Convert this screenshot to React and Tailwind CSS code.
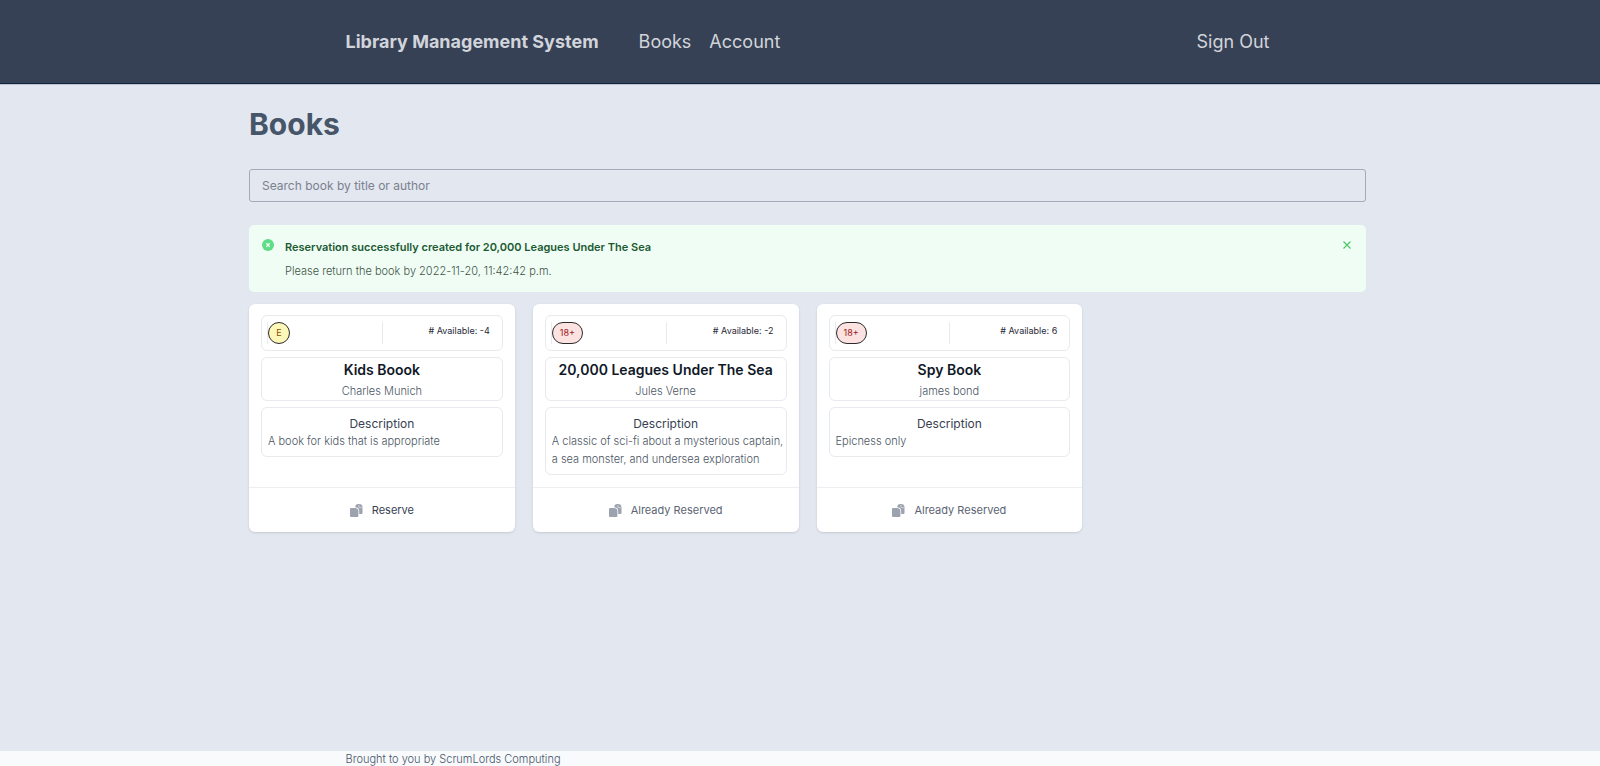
import React from "react";

const books = [
  {
    title: "Kids Boook",
    author: "Charles Munich",
    rating: "E",
    available: -4,
    description: "A book for kids that is appropriate",
    reserved: false,
  },
  {
    title: "20,000 Leagues Under The Sea",
    author: "Jules Verne",
    rating: "18+",
    available: -2,
    description:
      "A classic of sci-fi about a mysterious captain, a sea monster, and undersea exploration",
    reserved: true,
  },
  {
    title: "Spy Book",
    author: "james bond",
    rating: "18+",
    available: 6,
    description: "Epicness only",
    reserved: true,
  },
];

function DocumentsIcon() {
  return (
    <svg viewBox="0 0 13 13" className="size-[13px] fill-[#9ca3af]" aria-hidden="true">
      <path d="M1 4h4.100a3.300 3.300 0 0 1 3.300 3.300V12a1 1 0 0 1-1 1H1a1 1 0 0 1-1-1V5a1 1 0 0 1 1-1z" />
      <path d="M5.200 3.200C5.200 1.300 6.300 0 8 0h1.200a3.400 3.400 0 0 1 3.300 3.300v5.600a1 1 0 0 1-1 1H9.200V7.300a4.100 4.100 0 0 0-4-4.100z" />
      <path d="M8.900.800v2.100a.700.700 0 0 0 .700.700h2.300" fill="none" stroke="#fff" strokeWidth=".5" />
    </svg>
  );
}

function Header() {
  return (
    <header className="border-b border-[#0f2540] bg-[#374155] pl-[15px] text-lg leading-7 text-[#d1d5db] shadow-[0_1px_0_#bcc3d0]">
      <div className="mx-auto flex max-w-[924px] items-center pt-7 pb-[27px]">
        <span className="font-bold">Library Management System</span>
        <nav className="ml-10 flex flex-1 items-center gap-[18px]">
          <a href="#books">Books</a>
          <a href="#account">Account</a>
          <a href="#signout" className="ml-auto">
            Sign Out
          </a>
        </nav>
      </div>
    </header>
  );
}

function Alert() {
  return (
    <section
      role="status"
      className="mt-[23px] flex items-start rounded-[5px] bg-[#f0fdf4] px-[13px] pt-[14px] pb-[13px]"
    >
      <svg viewBox="0 0 12 12" className="size-3" aria-hidden="true">
        <circle cx="6" cy="6" r="6" fill="#5fdc86" />
        <path d="M4.300 4.300l3.400 3.400M7.700 4.300L4.300 7.700" stroke="#f0fdf4" strokeWidth="1.300" />
      </svg>
      <div className="ml-[11px] flex-1 text-[11px] leading-4">
        <h2 className="font-semibold text-[#1c5a33]">
          Reservation successfully created for 20,000 Leagues Under The Sea
        </h2>
        <p className="mt-2 font-light text-[#3f5548]">
          Please return the book by 2022-11-20, 11:42:42 p.m.
        </p>
      </div>
      <button type="button" aria-label="Dismiss" className="mt-[2px] mr-[2px]">
        <svg viewBox="0 0 8 8" className="size-2" aria-hidden="true">
          <path d="M.500.500l7 7M7.500.500l-7 7" stroke="#4cc766" strokeWidth="1.200" />
        </svg>
      </button>
    </section>
  );
}

function BookCard({ book }) {
  const badge = book.rating === "E" ? "bg-[#fdf8b8] text-[#854d0e]" : "bg-[#fde2e2] text-[#991b1b]";
  return (
    <li className="flex flex-col rounded-[6px] bg-white shadow-sm">
      <div className="flex flex-1 flex-col gap-[6px] px-3 pt-[11px] pb-3">
        <div className="rounded-[6px] border border-[#e9eaee] px-[5px] py-[6px]">
          <div className="grid grid-cols-2 text-[9px]">
            <div className="flex border-l border-[#e9eaee]">
              <span
                className={`flex h-[22px] min-w-[22px] items-center justify-center rounded-full border border-[#2b2b2b] px-[7px] pb-px leading-3 ${badge}`}
              >
                {book.rating}
              </span>
            </div>
            <div className="border-l border-[#e9eaee] pt-[3px] pr-[7px] text-right leading-3 text-[#1f2937]">
              # Available: {book.available}
            </div>
          </div>
        </div>
        <div className="rounded-[6px] border border-[#e9eaee] pt-[3px] text-center">
          <h3 className="text-[14px] leading-[18px] font-semibold text-[#111827]">{book.title}</h3>
          <p className="mt-1 text-[11px] leading-[17px] font-light text-[#4b5563]">{book.author}</p>
        </div>
        <div className="rounded-[6px] border border-[#e9eaee] pt-[7px] pb-[6px] pl-[6px]">
          <h4 className="pr-[6px] text-center text-[12px] leading-[17px] text-[#374151]">
            Description
          </h4>
          <p className="text-[11px] leading-[18px] font-light text-[#4b5563]">{book.description}</p>
        </div>
      </div>
      <button
        type="button"
        disabled={book.reserved}
        className="flex h-[45px] items-center justify-center gap-[9px] border-t border-[#eceef1] text-[11px] leading-4 text-[#374151] disabled:text-[#5b6472]"
      >
        <DocumentsIcon />
        {book.reserved ? "Already Reserved" : "Reserve"}
      </button>
    </li>
  );
}

export default function App() {
  return (
    <div className="flex min-h-screen flex-col bg-[#e2e7f0] font-['Inter',sans-serif]">
      <Header />
      <div className="flex-1 pl-[15px]">
        <main className="mx-auto max-w-[1117px] pt-[22px]">
          <h1 className="text-3xl leading-9 font-bold text-[#475569]">Books</h1>
          <input
            type="search"
            aria-label="Search book by title or author"
            placeholder="Search book by title or author"
            className="mt-[27px] block h-[33px] w-full rounded-[3px] border border-[#a3aab9] px-3 text-xs placeholder:text-[#7b818d]"
          />
          <Alert />
          <ul className="mt-3 grid grid-cols-4 gap-[18px]">
            {books.map((book) => (
              <BookCard key={book.title} book={book} />
            ))}
          </ul>
        </main>
      </div>
      <footer className="bg-[#f8fafc] pt-px pl-[15px] text-[11px] leading-[14px] font-light text-[#475569]">
        <p className="mx-auto max-w-[924px]">Brought to you by ScrumLords Computing</p>
      </footer>
    </div>
  );
}
